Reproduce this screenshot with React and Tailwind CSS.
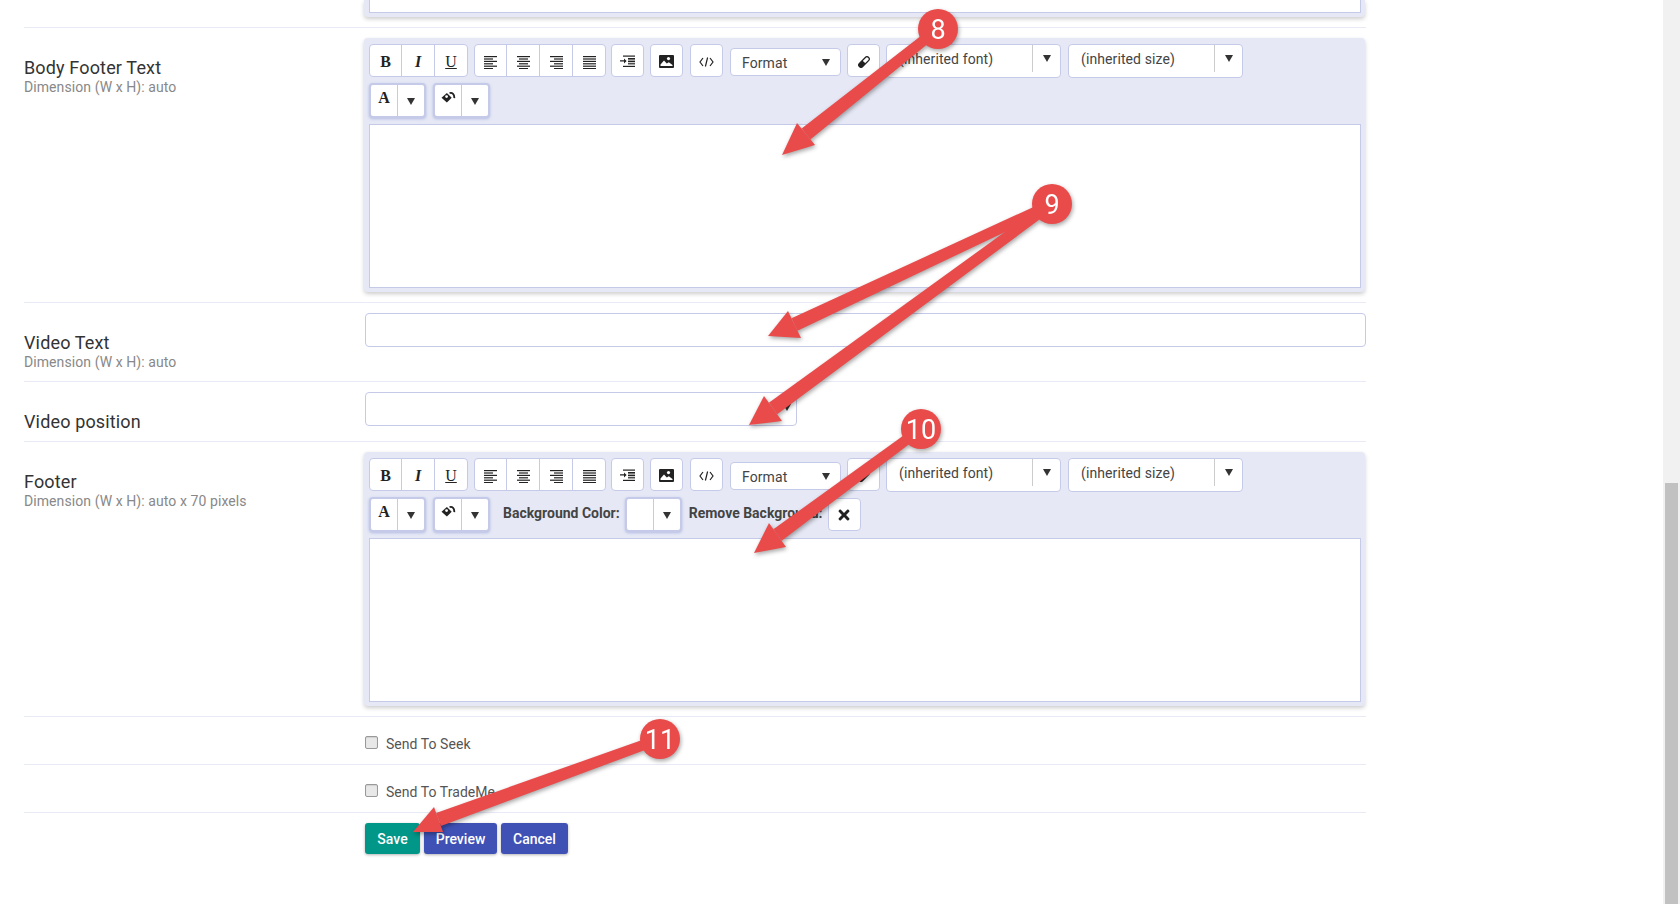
import React from "react";
import { FaTimes } from "react-icons/fa";

const Caret = () => (
  <svg width="8" height="7" viewBox="0 0 8 7" className="text-[#333]">
    <path d="M0 0h8L4 7z" fill="currentColor" />
  </svg>
);

const Lines = ({ rows }) => (
  <svg width="15" height="13" viewBox="0 0 15 13" fill="#222">
    {rows.map(([x, w], i) => (
      <rect key={i} x={x} y={i * 2.4} width={w} height="1.2" />
    ))}
  </svg>
);

const alignLeft = [[1, 13], [1, 9], [1, 13], [1, 9], [1, 13], [1, 9]];
const alignCenter = [[1, 13], [3, 9], [1, 13], [3, 9], [1, 13], [3, 9]];
const alignRight = [[1, 13], [5, 9], [1, 13], [5, 9], [1, 13], [5, 9]];
const alignJustify = [[1, 13], [1, 13], [1, 13], [1, 13], [1, 13], [1, 13]];

const IndentIcon = () => (
  <svg width="16" height="13" viewBox="0 0 16 13" fill="#222">
    <rect x="3" y="0.5" width="12" height="1.2" />
    <rect x="8" y="3" width="7" height="1.6" />
    <rect x="8" y="5.6" width="7" height="1.6" />
    <rect x="8" y="8.2" width="7" height="1.2" />
    <rect x="3" y="10.8" width="12" height="1.2" />
    <path d="M0 5.3h4V3.4l2.6 2.5L4 8.4V6.5H0z" />
  </svg>
);

const ImageIcon = () => (
  <svg width="15" height="13" viewBox="0 0 15 13">
    <rect width="15" height="13" rx="1" fill="#222" />
    <circle cx="9.5" cy="3.6" r="1.6" fill="#fff" />
    <path d="M1.5 9.5l3.5-4 2.8 3 2-1.2 3.7 2.6v1H1.5z" fill="#fff" />
  </svg>
);

const CodeIcon = () => (
  <svg width="15" height="10" viewBox="0 0 15 10" fill="none" stroke="#222" strokeWidth="1.2">
    <path d="M4 1L1 5l3 4M11 1l3 4-3 4M8.6 .5L6.4 9.5" />
  </svg>
);

const EraserIcon = () => (
  <svg width="12" height="12" viewBox="0 0 12 12">
    <path d="M7.6 1.2a1.9 1.9 0 0 1 2.7 0l.5.5a1.9 1.9 0 0 1 0 2.7L4.4 10.8a1.9 1.9 0 0 1-2.7 0l-.5-.5a1.9 1.9 0 0 1 0-2.7z" fill="#fff" stroke="#222" strokeWidth="1.3" />
    <path d="M4.4 4.4l3.2 3.2-3.2 3.2a1.9 1.9 0 0 1-2.7 0l-.5-.5a1.9 1.9 0 0 1 0-2.7z" fill="#222" />
  </svg>
);

const BucketIcon = () => (
  <svg width="15" height="12" viewBox="0 0 14 11">
    <path d="M0.5 5.2L5.5 0.8 10 5.2 5.5 9.8z" fill="#222" />
    <circle cx="5.2" cy="4.2" r="1.3" fill="#fff" />
    <path d="M8 1c2.6-.9 4.6 1.2 4.4 4.6" fill="none" stroke="#222" strokeWidth="1.7" />
  </svg>
);

const Letter = ({ className, children }) => (
  <span className={`font-['Liberation_Serif',serif] text-[16px] leading-none text-[#222] ${className}`}>
    {children}
  </span>
);

const Seg = ({ children, edge, last }) => (
  <div
    className={`flex h-full items-center justify-center pt-[3px] ${edge ? "w-[32px]" : "w-[33px]"} ${last ? "" : "border-r border-[#c5cae9]"}`}
  >
    {children}
  </div>
);

const Group = ({ className, children }) => (
  <div className={`flex h-[33px] rounded-[4px] border border-[#c5cae9] bg-white ${className}`}>{children}</div>
);

const Single = ({ className, children }) => (
  <div className={`flex h-[33px] w-[33px] items-center justify-center rounded-[4px] border border-[#c5cae9] bg-white pt-[2px] ${className}`}>
    {children}
  </div>
);

const Dropdown = ({ icon }) => (
  <div className="-mt-px flex h-[35px] rounded-[4px] border-2 border-[#c5cae9] bg-white shadow-[0_1px_3px_rgba(63,81,181,0.3)]">
    <div className="flex w-[27px] items-center justify-center border-r border-[#ccc]">{icon}</div>
    <div className="flex w-[26px] items-center justify-center pt-[1px]">
      <Caret />
    </div>
  </div>
);

const FontSelect = ({ text, className }) => (
  <div className={`flex h-[34px] w-[175px] items-stretch rounded-[4px] border border-[#c5cae9] bg-white ${className}`}>
    <div className="flex flex-1 items-center pb-[4px] pl-[12px] text-[14px] tracking-[0.1px] text-[#444]">{text}</div>
    <div className="mb-[5px] w-px bg-[#ccc]" />
    <div className="flex w-[27px] items-center justify-center pb-[6px]">
      <Caret />
    </div>
  </div>
);

const Editor = ({ extra }) => (
  <div className="flex h-[254px] w-[1001px] flex-col rounded-[4px] bg-[#e6e9f5] pl-[5px] pr-[4px] pt-[6px] shadow-[0_2px_4px_rgba(0,0,0,0.2)]">
    <div className="flex h-[34px] gap-[6px]">
      <Group>
        <Seg edge><Letter className="font-bold">B</Letter></Seg>
        <Seg><Letter className="font-bold italic">I</Letter></Seg>
        <Seg edge last><Letter className="underline">U</Letter></Seg>
      </Group>
      <Group className="-mr-px">
        <Seg edge><Lines rows={alignLeft} /></Seg>
        <Seg><Lines rows={alignCenter} /></Seg>
        <Seg><Lines rows={alignRight} /></Seg>
        <Seg edge last><Lines rows={alignJustify} /></Seg>
      </Group>
      <Single><IndentIcon /></Single>
      <Single><ImageIcon /></Single>
      <Single className="ml-px"><CodeIcon /></Single>
      <div className="ml-px mt-[4px] flex h-[28px] w-[111px] items-center justify-between rounded-[4px] border border-[#c5cae9] bg-white pl-[11px] pr-[10px] text-[14px] tracking-[0.1px] text-[#444]">
        <span className="pt-[3px]">Format</span>
        <Caret />
      </div>
      <Single><EraserIcon /></Single>
      <FontSelect text="(inherited font)" />
      <FontSelect text="(inherited size)" className="ml-px" />
    </div>
    <div className="mt-[6px] flex h-[34px] items-start">
      <Dropdown icon={<Letter className="-mt-[6px] font-bold">A</Letter>} />
      <div className="ml-[7px]">
        <Dropdown icon={<div className="-mt-[5px]"><BucketIcon /></div>} />
      </div>
      {extra}
    </div>
    <div className="mt-[6px] h-[164px] border border-[#c5cae9] bg-white" />
  </div>
);

const FooterExtra = () => (
  <>
    <span className="ml-[13px] pt-[5px] text-[14px] font-bold text-[#444]">Background Color:</span>
    <div className="ml-[5px]">
      <Dropdown icon={null} />
    </div>
    <span className="ml-[7px] pt-[5px] text-[14px] font-bold text-[#444]">Remove Background:</span>
    <div className="ml-[5px] flex h-[33px] w-[33px] items-center justify-center rounded-[4px] border border-[#c5cae9] bg-white">
      <FaTimes className="text-[16px] text-[#222]" />
    </div>
  </>
);

const Row = ({ label, sub, className, children }) => (
  <div className={`flex border-b border-[#e8eaf6] ${className}`}>
    <div className="w-[340px] shrink-0 pt-[30px] text-[18px] leading-[20px] tracking-[0.15px] text-[#333]">
      {label}
      {sub && <div className="-mt-px text-[14px] tracking-[0.08px] text-[#888]">{sub}</div>}
    </div>
    <div className="pt-[10px]">{children}</div>
  </div>
);

const CheckRow = ({ label }) => (
  <div className="flex h-[48px] items-center border-b border-[#e8eaf6] pl-[341px] pt-[7px]">
    <div className="-mt-[3px] h-[13px] w-[13px] rounded-[2px] border border-[#999] bg-[#e8e8e8] shadow-[inset_0_1px_1px_rgba(0,0,0,0.1)]" />
    <span className="ml-[8px] text-[14px] tracking-[0.05px] text-[#555]">{label}</span>
  </div>
);

// annotation arrows from the screenshot, coordinates are page pixels
const arrows = [
  { n: "8", c: [938, 29], tip: [782, 155], a: [797, 123], b: [815, 145] },
  { c: [1052, 204], tip: [768, 336], a: [788, 311], b: [801, 338] },
  { n: "9", c: [1052, 204], tip: [749, 425], a: [764, 396], b: [782, 421] },
  { n: "10", c: [921, 429], tip: [754, 553], a: [769, 523], b: [786, 547] },
  { n: "11", c: [660, 739], tip: [413, 832], a: [434, 807], b: [443, 832] },
];

// shaft is a little narrower at the circle than at the head
const shaftPoints = (arrow) => {
  const baseX = (arrow.a[0] + arrow.b[0]) / 2;
  const baseY = (arrow.a[1] + arrow.b[1]) / 2;
  const dx = baseX - arrow.c[0];
  const dy = baseY - arrow.c[1];
  const len = Math.hypot(dx, dy);
  const nx = -dy / len;
  const ny = dx / len;
  const p = (x, y, w) => `${x + nx * w},${y + ny * w}`;
  return [
    p(arrow.c[0], arrow.c[1], 5),
    p(baseX, baseY, 7),
    p(baseX, baseY, -7),
    p(arrow.c[0], arrow.c[1], -5),
  ].join(" ");
};

const Annotations = () => (
  <svg
    width="1680"
    height="904"
    viewBox="0 0 1680 904"
    className="pointer-events-none absolute left-0 top-0 drop-shadow-[1px_2px_2px_rgba(0,0,0,0.35)]"
  >
    {arrows.map((arrow, i) => (
      <g key={i} fill="#e94b4b">
        <polygon points={shaftPoints(arrow)} />
        <polygon points={`${arrow.tip} ${arrow.a} ${arrow.b}`} />
        {arrow.n && (
          <>
            <circle cx={arrow.c[0]} cy={arrow.c[1]} r="20" />
            <text
              x={arrow.c[0]}
              y={arrow.c[1] + 10}
              textAnchor="middle"
              fill="#fff"
              fontSize="27"
              fontFamily="'Roboto', sans-serif"
            >
              {arrow.n}
            </text>
          </>
        )}
      </g>
    ))}
  </svg>
);

export default function App() {
  return (
    <div className="relative flex h-[904px] w-[1680px] overflow-hidden bg-white font-['Roboto',sans-serif]">
      <main className="w-[1663px] pl-[24px] pr-[297px]">
        <div className="h-[28px] border-b border-[#e8eaf6] pl-[340px]">
          <div className="h-[17px] w-[1001px] rounded-b-[4px] bg-[#e6e9f5] pl-[5px] pr-[4px] shadow-[0_2px_4px_rgba(0,0,0,0.2)]">
            <div className="h-[13px] border-x border-b border-[#c5cae9] bg-white" />
          </div>
        </div>

        <Row label="Body Footer Text" sub="Dimension (W x H): auto" className="h-[275px]">
          <Editor />
        </Row>

        <Row label="Video Text" sub="Dimension (W x H): auto" className="h-[79px]">
          <div className="ml-px h-[34px] w-[1001px] rounded-[4px] border border-[#c5cae9] bg-white" />
        </Row>

        <Row label="Video position" className="h-[60px]">
          <div className="ml-px flex h-[34px] w-[432px] justify-end rounded-[4px] border border-[#c5cae9] bg-white pr-[5px] pt-[11px]">
            <Caret />
          </div>
        </Row>

        <Row label="Footer" sub="Dimension (W x H): auto x 70 pixels" className="h-[275px]">
          <Editor extra={<FooterExtra />} />
        </Row>

        <CheckRow label="Send To Seek" />
        <CheckRow label="Send To TradeMe" />

        <div className="flex gap-[4px] pl-[341px] pt-[10px] text-[14px] font-medium text-white">
          <button className="h-[31px] w-[55px] rounded-[3px] bg-[#009688] pt-[1px] shadow-[0_1px_3px_rgba(0,0,0,0.3)]">Save</button>
          <button className="h-[31px] w-[73px] rounded-[3px] bg-[#3f51b5] pt-[1px] shadow-[0_1px_3px_rgba(0,0,0,0.3)]">Preview</button>
          <button className="h-[31px] w-[67px] rounded-[3px] bg-[#3f51b5] pt-[1px] shadow-[0_1px_3px_rgba(0,0,0,0.3)]">Cancel</button>
        </div>
      </main>

      <div className="flex w-[17px] flex-col bg-[#f1f1f1] px-[2px] pt-[483px]">
        <div className="flex-1 bg-[#c1c1c1]" />
      </div>

      <Annotations />
    </div>
  );
}
